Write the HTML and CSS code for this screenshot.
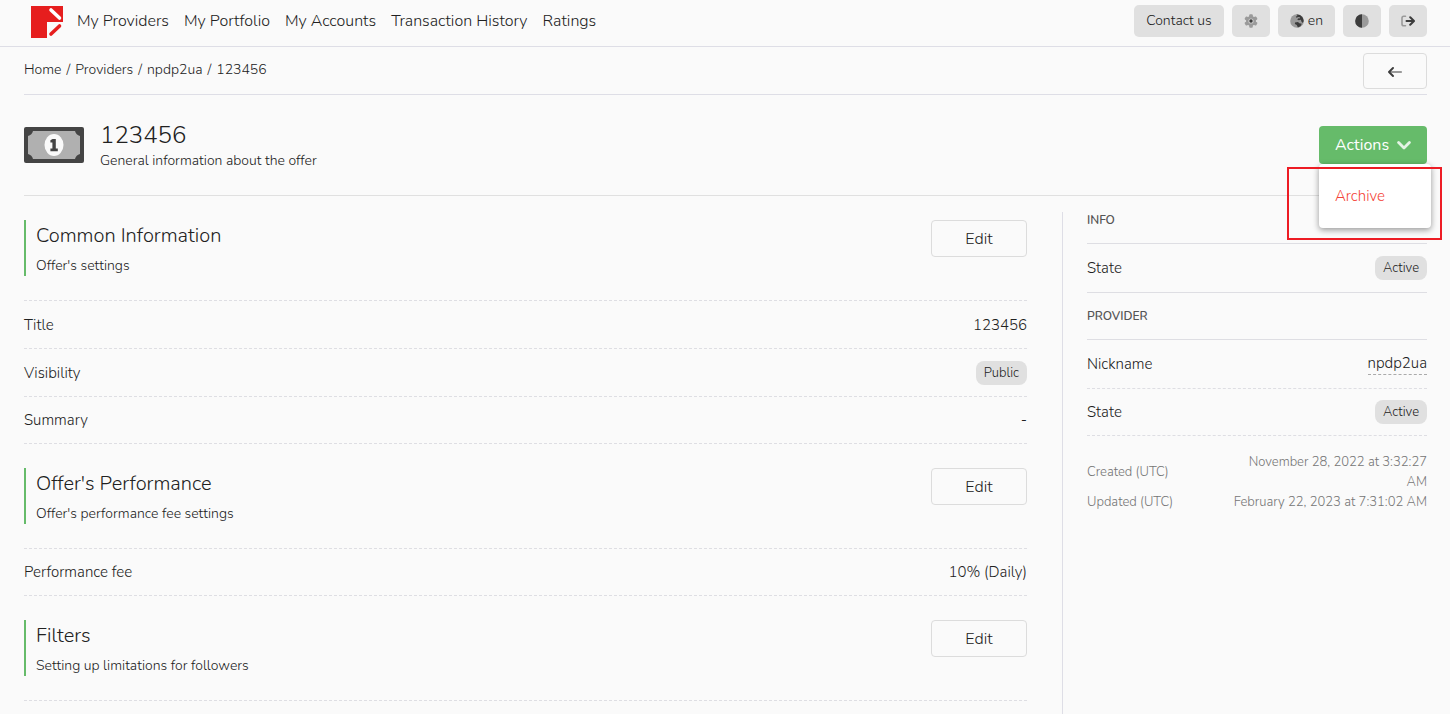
FILE: index.html
```html
<!DOCTYPE html>
<html lang="en">
<head>
<meta charset="utf-8">
<title>123456 – Offer</title>
<link rel="stylesheet" href="styles.css">
</head>
<body>
<header class="topbar">
  <a class="logo" href="#" aria-label="Home page">
    <svg width="32" height="32" viewBox="0 0 32 32"><path fill="#e61e1e" d="M0 0h32v16H16v16H0z"/><path d="M20 4l8.500 8" stroke="#fff" stroke-width="3.600" stroke-linecap="round"/><path d="M20 28l8.500-8" stroke="#e61e1e" stroke-width="3.600" stroke-linecap="round"/></svg>
  </a>
  <nav class="nav">
    <a href="#">My Providers</a>
    <a href="#">My Portfolio</a>
    <a href="#">My Accounts</a>
    <a href="#">Transaction History</a>
    <a href="#">Ratings</a>
  </nav>
  <div class="tools">
    <button class="tool" type="button">Contact us</button>
    <button class="tool" type="button" aria-label="Settings">
      <svg width="14" height="14" viewBox="0 0 14 14"><g fill="#9a9a9a"><circle cx="7" cy="7" r="5"/><rect x="5.200" y="0.300" width="3.600" height="13.400" rx="1"/><rect x="5.200" y="0.300" width="3.600" height="13.400" rx="1" transform="rotate(60 7 7)"/><rect x="5.200" y="0.300" width="3.600" height="13.400" rx="1" transform="rotate(120 7 7)"/></g><circle cx="7" cy="7" r="2.600" fill="#d0d0d0"/><circle cx="7" cy="7" r="1.700" fill="#3c3c3c"/></svg>
    </button>
    <button class="tool" type="button">
      <svg width="14" height="14" viewBox="0 0 14 14"><circle cx="7" cy="7" r="6.800" fill="#9a9a9a"/><path fill="#3c3c3c" d="M6.500.500C10 0 13.700 3 13.700 7l-.8 2-1.400-1.200-.6-2-2.100.4-1.600-.7 1.200-1.200 1.300.2.300-1.200-1.700-.3-1.900.8-.6-1.300 1.700-.5zM5 8.400l3-.3 1.300 1.200 2.500.4-1.300 2.600-2.600 1.200-1.100-2.400-1.900-1z"/></svg>
      en
    </button>
    <button class="tool" type="button" aria-label="Toggle theme">
      <svg width="14" height="14" viewBox="0 0 14 14"><circle cx="7" cy="7" r="6.800" fill="#9a9a9a"/><path d="M7 .2a6.800 6.800 0 0 0 0 13.600z" fill="#3c3c3c"/></svg>
    </button>
    <button class="tool" type="button" aria-label="Log out">
      <svg width="14" height="14" viewBox="0 0 14 14" fill="none" stroke-linecap="round" stroke-linejoin="round"><path d="M4.500 2.200H2.700Q1 2.200 1 4v6q0 1.800 1.700 1.800h1.800" stroke="#9a9a9a" stroke-width="1.600"/><path d="M5.500 7h7M9.200 3.200L13 7l-3.800 3.800" stroke="#3c3c3c" stroke-width="2"/></svg>
    </button>
  </div>
</header>

<div class="page">
  <div class="crumbbar">
    <nav class="crumbs" aria-label="Breadcrumb">
      <a href="#">Home</a><span>/</span><a href="#">Providers</a><span>/</span><a href="#">npdp2ua</a><span>/</span><a href="#">123456</a>
    </nav>
    <button class="outline back" type="button" aria-label="Back">
      <svg width="14" height="14" viewBox="0 0 14 14" fill="none" stroke-linecap="round" stroke-linejoin="round"><path d="M2 8h11.200" stroke="#9a9a9a" stroke-width="1.800"/><path d="M5 4L1 8l4 4" stroke="#3c3c3c" stroke-width="1.900"/></svg>
    </button>
  </div>

  <section class="hero">
    <svg class="bill" width="60" height="36" viewBox="0 0 60 36"><rect width="60" height="36" rx="2" fill="#444"/><path fill="#b0b0b0" d="M9 4h42q1 4 5 5v18q-4 1-5 5H9q-1-4-5-5V9q4-1 5-5z"/><ellipse cx="30" cy="18" rx="9.500" ry="11" fill="#fafafa"/><path fill="#444" d="M28.500 12h3.300v9.600h2v2.600h-7.400v-2.600h2v-6h-2v-2.300z"/></svg>
    <div class="hero-text">
      <h1>123456</h1>
      <p>General information about the offer</p>
    </div>
    <div class="actions">
      <button class="primary" type="button" aria-expanded="true">Actions
        <svg width="14" height="10" viewBox="0 0 14 10" fill="none"><path d="M1.600 2.500L7 7.900l5.400-5.400" stroke="#e4f3e4" stroke-width="2.800" stroke-linecap="round" stroke-linejoin="round"/></svg>
      </button>
      <div class="menu"><a href="#">Archive</a></div>
      <div class="highlight"></div>
    </div>
  </section>

  <div class="columns">
    <main class="main">
      <section class="block">
        <div class="block-head">
          <div class="block-title"><h2>Common Information</h2><p>Offer's settings</p></div>
          <button class="outline edit" type="button">Edit</button>
        </div>
        <dl class="rows">
          <div class="row"><dt>Title</dt><dd>123456</dd></div>
          <div class="row"><dt>Visibility</dt><dd><span class="badge">Public</span></dd></div>
          <div class="row"><dt>Summary</dt><dd>-</dd></div>
        </dl>
      </section>
      <section class="block">
        <div class="block-head">
          <div class="block-title"><h2>Offer's Performance</h2><p>Offer's performance fee settings</p></div>
          <button class="outline edit" type="button">Edit</button>
        </div>
        <dl class="rows">
          <div class="row"><dt>Performance fee</dt><dd>10% (Daily)</dd></div>
        </dl>
      </section>
      <section class="block">
        <div class="block-head">
          <div class="block-title"><h2>Filters</h2><p>Setting up limitations for followers</p></div>
          <button class="outline edit" type="button">Edit</button>
        </div>
      </section>
    </main>

    <aside class="side">
      <h3 class="first">Info</h3>
      <dl class="rows solid">
        <div class="row"><dt>State</dt><dd><span class="badge">Active</span></dd></div>
      </dl>
      <h3>Provider</h3>
      <dl class="rows">
        <div class="row tall"><dt>Nickname</dt><dd><a class="nick" href="#">npdp2ua</a></dd></div>
        <div class="row"><dt>State</dt><dd><span class="badge">Active</span></dd></div>
      </dl>
      <dl class="dates">
        <div><dt>Created (UTC)</dt><dd>November 28, 2022 at 3:32:27 AM</dd></div>
        <div><dt>Updated (UTC)</dt><dd>February 22, 2023 at 7:31:02 AM</dd></div>
      </dl>
    </aside>
  </div>
</div>
</body>
</html>
```
FILE: styles.css
```css
* { box-sizing: border-box; }
html { height: 100%; }
body {
  min-height: 100%;
  margin: 0;
  display: flex;
  flex-direction: column;
  background: #fafafa;
  color: #212121;
  font: 300 15px/24px Nunito, "Open Sans", sans-serif;
}
h1, h2, h3, p, dl, dd { margin: 0; font-weight: 300; }
a { color: inherit; text-decoration: none; }
button { font: inherit; color: inherit; cursor: pointer; }
svg { display: block; flex: none; }

.topbar {
  flex: none;
  display: flex;
  align-items: flex-start;
  height: 47px;
  padding: 5px 23px 0 31px;
  border-bottom: 1px solid #dedee6;
}
.logo { margin-top: 1px; }
.nav { display: flex; gap: 15px; margin-left: 14px; padding-top: 4px; font-size: 16px; }
.tools { display: flex; gap: 8px; margin-left: auto; }
.tool {
  display: flex;
  align-items: center;
  gap: 4px;
  height: 32px;
  padding: 0 12px;
  border: 0;
  border-radius: 5px;
  background: #e0e0e0;
  font-size: 14px;
}

.page { flex: 1; display: flex; flex-direction: column; padding: 0 23px 0 24px; }
.crumbbar {
  display: flex;
  justify-content: space-between;
  align-items: flex-start;
  height: 48px;
  padding-top: 6px;
  border-bottom: 1px solid #dedee6;
}
.crumbs { display: flex; gap: 5px; padding-top: 5px; font-size: 14px; }
.outline {
  display: flex;
  align-items: center;
  justify-content: center;
  border: 1px solid #dcdcdc;
  border-radius: 4px;
  background: #fafafa;
}
.back { width: 64px; height: 36px; }

.hero {
  display: flex;
  align-items: center;
  height: 101px;
  border-bottom: 1px solid #e0e0e0;
}
.hero-text { margin-left: 16px; padding-top: 2px; }
.hero h1 { font-size: 24px; line-height: 30px; }
.hero p { font-size: 14px; line-height: 22px; }
.actions { position: relative; margin-left: auto; }
.primary {
  display: flex;
  align-items: center;
  justify-content: space-between;
  width: 108px;
  height: 38px;
  padding: 0 16px;
  border: 0;
  border-radius: 4px;
  background: #66bb6a;
  color: #fff;
  font-size: 16px;
  font-weight: 400;
}
.menu {
  position: absolute;
  z-index: 1;
  top: 38px;
  left: 0;
  width: 112px;
  padding: 20px 16px;
  border-radius: 4px;
  background: #fff;
  color: #f44336;
  box-shadow: 0 2px 6px rgba(0, 0, 0, .4);
}
.menu a { display: block; }
.highlight {
  position: absolute;
  z-index: 2;
  top: 41px;
  left: -32px;
  width: 155px;
  height: 73px;
  border: 2px solid #ed1c24;
  pointer-events: none;
}

.columns { flex: 1; display: flex; }
.main { flex: 1; padding-right: 35px; }
.block { padding-top: 24px; }
.block-head {
  display: flex;
  justify-content: space-between;
  align-items: flex-start;
  padding-bottom: 24px;
  border-bottom: 1px dashed #dedee3;
}
.block-title { padding-left: 10px; border-left: 2px solid #66bb6a; }
.block-title h2 { font-size: 20px; line-height: 32px; }
.block-title p { padding-top: 4px; font-size: 14px; line-height: 20px; }
.edit { width: 96px; height: 37px; font-size: 16px; }
.row {
  display: flex;
  justify-content: space-between;
  align-items: center;
  height: 48px;
  border-bottom: 1px dashed #dedee3;
}
.row:last-child { height: 47px; }
.badge {
  display: block;
  padding: 0 8px;
  border-radius: 8px;
  background: #e0e0e0;
  font-size: 13px;
  line-height: 24px;
}

.side {
  flex: none;
  width: 365px;
  margin-top: 16px;
  padding-left: 24px;
  border-left: 1px solid #dedee6;
}
.side h3 {
  display: flex;
  align-items: center;
  height: 47px;
  border-bottom: 1px solid #dedee3;
  color: #555;
  font-size: 12px;
  line-height: 16px;
  font-weight: 600;
  text-transform: uppercase;
}
.side h3.first { align-items: flex-start; height: 32px; }
.side .solid .row { height: 49px; border-bottom-style: solid; }
.side .tall { height: 49px; }
.nick { display: block; line-height: 21px; border-bottom: 1px dashed #aaa; }
.dates { padding-top: 16px; color: #757575; font-size: 13px; line-height: 20px; }
.dates div { display: flex; justify-content: space-between; align-items: center; }
.dates dd { width: 200px; text-align: right; }
```
